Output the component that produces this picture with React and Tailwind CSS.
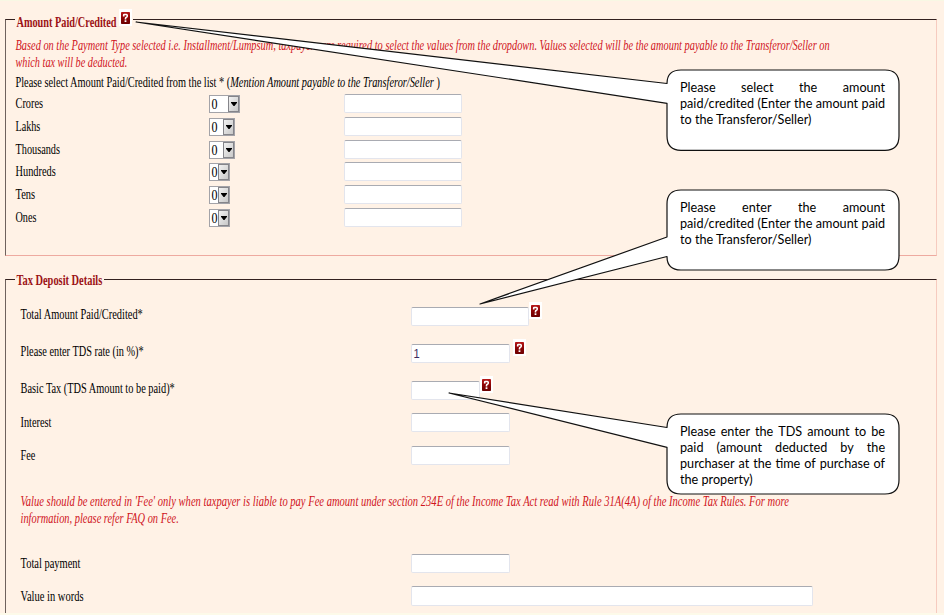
import { useLayoutEffect, useRef, useState } from "react";
import clsx from "clsx";

const serif = "font-['Liberation_Serif',serif] text-[15px]";

// Condenses a single line of text so that it spans exactly `width` pixels.
function Fit({ width, className, children }) {
  const ref = useRef(null);
  const [scale, setScale] = useState(1);
  useLayoutEffect(() => {
    setScale(width / ref.current.offsetWidth);
  }, [width]);
  return (
    <span className="block h-4 shrink-0 leading-4" style={{ width }}>
      <span
        ref={ref}
        className={clsx("inline-block origin-left whitespace-nowrap leading-4", className)}
        style={{ transform: `translateX(0.5px) scaleX(${scale})` }}
      >
        {children}
      </span>
    </span>
  );
}

function Help({ className }) {
  return (
    <span className={clsx("flex h-[17px] w-[13px] shrink-0 items-center justify-center bg-white", className)}>
      <svg width="9" height="12" viewBox="0 0 9 12">
        <defs>
          <linearGradient id="help" x1="0" y1="0" x2="0" y2="1">
            <stop offset="0" stopColor="#b81818" />
            <stop offset="0.5" stopColor="#8c0404" />
            <stop offset="1" stopColor="#6c0000" />
          </linearGradient>
        </defs>
        <rect width="9" height="12" rx="0.8" fill="url(#help)" />
        <path d="M2.7 4.4V3.1Q2.7 2.5 3.4 2.5H5.4Q6.2 2.5 6.2 3.3V4.3Q6.2 5 5.4 5.3Q4.5 5.6 4.5 6.4V7.4" fill="none" stroke="#fff" strokeWidth="1.6" />
        <rect x="3.6" y="8.3" width="1.8" height="1.7" fill="#fff" />
      </svg>
    </span>
  );
}

function Box({ className, children }) {
  return (
    <div
      className={clsx(
        "shrink-0 rounded-[2px] border border-[#e3e5ed] border-t-[#a9abb2] bg-white",
        className
      )}
    >
      {children}
    </div>
  );
}

function Select({ className }) {
  return (
    <div className={clsx("flex h-[18px] border border-[#a3a3a8] bg-white", className)}>
      <span className="flex flex-1 items-center pl-px">
        <Fit width={6} className="font-['Liberation_Serif',serif] text-[14px]">0</Fit>
      </span>
      <span className="flex w-[11px] items-center justify-center border border-[#85858a] bg-gradient-to-br from-[#f2f2f2] to-[#c8c8c8]">
        <svg width="6" height="4" viewBox="0 0 6 4" className="shrink-0">
          <path d="M0 0H6V0.8L3.5 4H2.5L0 0.8Z" fill="#000" />
        </svg>
      </span>
    </div>
  );
}

const denominations = [
  { label: "Crores", width: 27.5, row: "h-[23px]", select: "w-[31px]" },
  { label: "Lakhs", width: 25, row: "h-[23px]", select: "w-[26px]" },
  { label: "Thousands", width: 44.5, row: "h-[22px]", select: "w-[26px]" },
  { label: "Hundreds", width: 40, row: "h-[23px]", select: "w-[21px]" },
  { label: "Tens", width: 19.5, row: "h-[23px]", select: "w-[21px]" },
  { label: "Ones", width: 21, row: "h-[23px]", select: "w-[21px]" },
];

const taxRows = [
  { label: "Total Amount Paid/Credited*", width: 122, row: "h-[37px]", pad: "pt-1", box: "h-[19px] w-[118px] mt-[5px]", help: "ml-0" },
  { label: "Please enter TDS rate (in %)*", width: 123, row: "h-[37px]", pad: "pt-1", box: "h-[19px] w-[99px] mt-[5px]", help: "ml-[3px]", value: "1" },
  { label: "Basic Tax (TDS Amount to be paid)*", width: 154.5, row: "h-[37px]", pad: "pt-1", box: "h-[19px] w-[69px] mt-[5px]", help: "ml-0" },
  { label: "Interest", width: 31, row: "h-[33px]", pad: "pt-px", box: "h-[19px] w-[99px]" },
  { label: "Fee", width: 15, row: "h-[33px]", pad: "pt-px", box: "h-[19px] w-[99px]" },
];

const totalRows = [
  { label: "Total payment", width: 60, row: "h-8", pad: "pt-px", box: "h-[19px] w-[99px]" },
  { label: "Value in words", width: 63, row: "h-7", pad: "pt-0.5", box: "h-5 w-[402px]" },
];

function TaxRow({ label, width, row, pad, box, help, value }) {
  return (
    <div className={clsx("flex items-start", row)}>
      <div className={clsx("w-[391px] shrink-0", pad)}>
        <Fit width={width} className={serif}>{label}</Fit>
      </div>
      <Box className={box}>
        {value && (
          <div className="pl-px">
            <Fit width={6} className="font-['Liberation_Sans',sans-serif] text-[13px] text-[#3c2a5c]">{value}</Fit>
          </div>
        )}
      </Box>
      {help && <Help className={help} />}
    </div>
  );
}

function Callout({ className, lines }) {
  return (
    <div className={clsx("absolute left-[680px] w-[211px] origin-left scale-x-[0.972] text-black", className)}>
      {lines.map((line, i) => (
        <div
          key={line}
          className={clsx(
            "h-4 whitespace-nowrap font-['Lato',sans-serif] text-[13px] leading-4",
            i < lines.length - 1 && "flex justify-between"
          )}
        >
          {i < lines.length - 1
            ? line.split(" ").map((word, j) => <span key={j}>{word}</span>)
            : line}
        </div>
      ))}
    </div>
  );
}

export default function App() {
  return (
    <div className={clsx("relative h-[615px] w-[944px] overflow-hidden border-b-2 border-t border-b-[#fdfae9] border-t-[#f8f8e4] bg-[#fff2e6] text-black", serif)}>
      <div className="flex flex-col pl-[5px] pr-[7px] pt-[18px]">
        <section className="h-[237px] border border-b-[#eeaaa0] border-l-[#6f625d] border-r-[#f6cbbf] border-t-[#33211f] pl-[9px]">
          <div className="-mt-[11px] flex h-[27px] w-[118px] items-start bg-[#fff2e6]">
            <div className="pt-[5px] pl-px">
              <Fit width={100} className="font-bold text-[#9c1216]">Amount Paid/Credited</Fit>
            </div>
            <Help className="ml-[3px]" />
          </div>
          <div className="mt-px text-[#d0141c]">
            <Fit width={814.5} className="italic">
              Based on the Payment Type selected i.e. Installment/Lumpsum, taxpayers are required to select the values from the dropdown. Values selected will be the amount payable to the Transferor/Seller on
            </Fit>
            <div className="pt-px">
              <Fit width={112} className="italic">which tax will be deducted.</Fit>
            </div>
          </div>
          <div className="mt-1">
            <Fit width={424.5}>
              Please select Amount Paid/Credited from the list * (<em>Mention Amount payable to the Transferor/Seller </em>)
            </Fit>
          </div>
          <div className="mt-0.5">
            {denominations.map((d) => (
              <div key={d.label} className={clsx("flex items-start", d.row)}>
                <div className="w-[194px] shrink-0 pt-[3px]">
                  <Fit width={d.width}>{d.label}</Fit>
                </div>
                <div className="w-[135px] shrink-0 pt-[3px]">
                  <Select className={d.select} />
                </div>
                <Box className="mt-0.5 h-[19px] w-[118px]" />
              </div>
            ))}
          </div>
        </section>

        <section className="mt-[23px] h-[336px] border border-b-0 border-l-[#6f625d] border-r-[#f6cbbf] border-t-[#33211f] pl-[14px]">
          <div className="-ml-[5px] -mt-2 flex w-[89px] bg-[#fff2e6] pl-px">
            <Fit width={86} className="font-bold text-[#9c1216]">Tax Deposit Details</Fit>
          </div>
          <div className="mt-3.5">
            {taxRows.map((r) => <TaxRow key={r.label} {...r} />)}
          </div>
          <div className="mt-3.5 text-[#d0141c]">
            <Fit width={768} className="italic">
              Value should be entered in 'Fee' only when taxpayer is liable to pay Fee amount under section 234E of the Income Tax Act read with Rule 31A(4A) of the Income Tax Rules. For more
            </Fit>
            <div className="pt-px">
              <Fit width={158.5} className="italic">information, please refer FAQ on Fee.</Fit>
            </div>
          </div>
          <div className="mt-7">
            {totalRows.map((r) => <TaxRow key={r.label} {...r} />)}
          </div>
        </section>
      </div>

      <svg className="absolute left-0 -top-px" width="944" height="615" viewBox="0 0 944 615" fill="#fff" stroke="#111" strokeWidth="1.2" strokeLinejoin="round">
        <path d="M667 83.5Q667 70 681 70H885Q899 70 899 84V136Q899 150.3 885 150.3H681Q667 150.3 667 136V103.3L136 22Z" />
        <path d="M667 237V204Q667 190 681 190H885Q899 190 899 204V256Q899 270 885 270H681Q667 270 667 256.5L480 304Z" />
        <path d="M667 427.5Q667 414 681 414H885Q899 414 899 428V480Q899 494 885 494H681Q667 494 667 480V447.3L449 393Z" />
      </svg>
      <Callout className="top-[78px]" lines={["Please select the amount", "paid/credited (Enter the amount paid", "to the Transferor/Seller)"]} />
      <Callout className="top-[198px]" lines={["Please enter the amount", "paid/credited (Enter the amount paid", "to the Transferor/Seller)"]} />
      <Callout className="top-[422px]" lines={["Please enter the TDS amount to be", "paid (amount deducted by the", "purchaser at the time of purchase of", "the property)"]} />
    </div>
  );
}
